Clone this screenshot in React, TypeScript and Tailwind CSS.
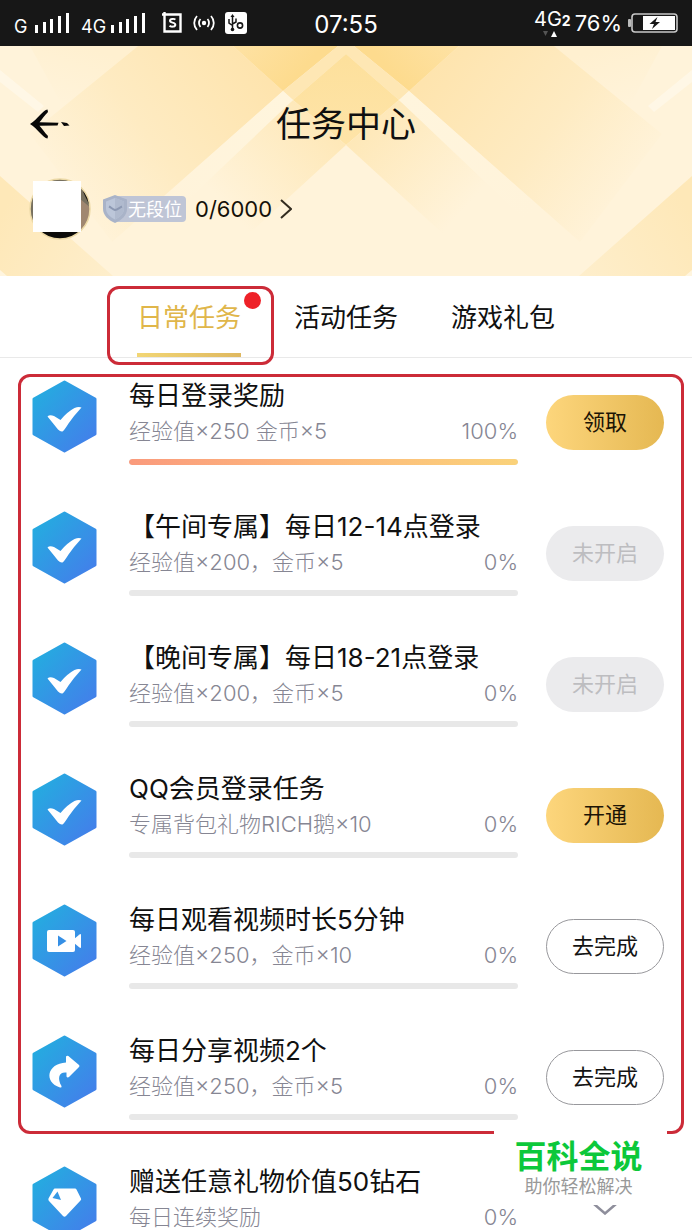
import React, { useState } from 'react';

type IconKind = 'check' | 'video' | 'share' | 'diamond';
type ActionKind = 'gold' | 'disabled' | 'outline' | 'more';

interface Task {
  title: string;
  reward: string;
  progress: number;
  icon: IconKind;
  action: ActionKind;
  label: string;
}

const TABS = ['日常任务', '活动任务', '游戏礼包'];

const TASKS: Task[] = [
  { title: '每日登录奖励', reward: '经验值×250 金币×5', progress: 100, icon: 'check', action: 'gold', label: '领取' },
  { title: '【午间专属】每日12-14点登录', reward: '经验值×200，金币×5', progress: 0, icon: 'check', action: 'disabled', label: '未开启' },
  { title: '【晚间专属】每日18-21点登录', reward: '经验值×200，金币×5', progress: 0, icon: 'check', action: 'disabled', label: '未开启' },
  { title: 'QQ会员登录任务', reward: '专属背包礼物RICH鹅×10', progress: 0, icon: 'check', action: 'gold', label: '开通' },
  { title: '每日观看视频时长5分钟', reward: '经验值×250，金币×10', progress: 0, icon: 'video', action: 'outline', label: '去完成' },
  { title: '每日分享视频2个', reward: '经验值×250，金币×5', progress: 0, icon: 'share', action: 'outline', label: '去完成' },
];

const GIFT_TASK: Task = {
  title: '赠送任意礼物价值50钻石', reward: '每日连续奖励', progress: 0, icon: 'diamond', action: 'more', label: '展开',
};

const ACTION_STYLES = {
  gold: 'bg-linear-to-r from-[#fdd67c] to-[#e5b852] text-[#1c1405]',
  disabled: 'bg-[#ebebed] text-[#bdbdc0]',
  outline: 'border border-[#98989c] bg-white text-[#141414]',
};

const Signal = () => (
  <svg className="h-5 w-9" viewBox="0 0 36 20" fill="#fff" aria-hidden="true">
    <rect x="0" y="12" width="3" height="8" />
    <rect x="8" y="9" width="3" height="11" />
    <rect x="15" y="6" width="3" height="14" />
    <rect x="23" y="3" width="3" height="17" />
    <rect x="31" y="0" width="3" height="20" />
  </svg>
);

const StatusBar = () => (
  <div className="grid h-[46px] grid-cols-[1fr_auto_1fr] items-center bg-[#171717] px-[14px] text-white">
    <div className="flex items-center">
      <span className="mt-2 w-[21px] text-lg">G</span>
      <Signal />
      <span className="ml-[10px] mt-2 w-[30px] text-lg">4G</span>
      <Signal />
      <svg className="ml-[15px] h-[22px] w-5" viewBox="0 0 20 22" fill="none" stroke="#fff" aria-hidden="true">
        <path d="M0 2.5H18.5V19.5H2.5V0" strokeWidth="2.4" />
        <path d="M13.3 7.6C12.5 6.6 8 6.4 8 8.7C8 11.2 13.3 10 13.3 12.7C13.3 15.2 8.500 15 7.600 13.600" strokeWidth="2" />
      </svg>
      <svg className="ml-[11px] h-[18px] w-[22px]" viewBox="0 0 22 18" fill="none" stroke="#fff" strokeWidth="1.8" aria-hidden="true">
        <circle cx="11" cy="9" r="2.200" fill="#fff" stroke="none" />
        <path d="M7.500 5C5.500 7.200 5.500 10.800 7.500 13M14.500 5C16.500 7.200 16.500 10.800 14.500 13M4 2C0.300 6 0.300 12 4 16M18 2C21.700 6 21.700 12 18 16" />
      </svg>
      <svg className="ml-[10px] h-[22px] w-[22px]" viewBox="0 0 22 22" fill="none" stroke="#171717" aria-hidden="true">
        <rect width="22" height="22" rx="3" fill="#fff" stroke="none" />
        <path d="M7.500 4V17M4 7V11L7.500 13.500M11 6.500V10L7.500 12" strokeWidth="1.500" />
        <path d="M5.500 5L7.500 2L9.500 5Z" fill="#171717" stroke="none" />
        <circle cx="7.500" cy="17.500" r="1.800" fill="#171717" stroke="none" />
        <circle cx="15" cy="13.500" r="2.600" strokeWidth="1.600" />
      </svg>
    </div>
    <span className="pt-1 text-2xl">07:55</span>
    <div className="flex items-center justify-end">
      <div className="flex flex-col">
        <span className="text-xl leading-[20px]">4G<b className="text-sm">2</b></span>
        <svg className="ml-[9px] h-[6px] w-[14px]" viewBox="0 0 14 6" aria-hidden="true">
          <path d="M0 0H5L2.500 5Z" fill="#555" />
          <path d="M8 6H14L11 0Z" fill="#fff" />
        </svg>
      </div>
      <span className="ml-1 text-[22px]">76%</span>
      <svg className="ml-[6px] h-5 w-[50px]" viewBox="0 0 50 20" aria-hidden="true">
        <rect x="0" y="6" width="3" height="8" rx="1" fill="#bbb" />
        <rect x="4" y="1" width="45" height="18" rx="3" fill="none" stroke="#c8c8c8" strokeWidth="1.600" />
        <rect x="15" y="3" width="32" height="14" fill="#fff" />
        <path d="M29.500 4L21.500 11H26L24 16L32 9H27.500Z" fill="#171717" />
      </svg>
    </div>
  </div>
);

// Overlapping golden ribbons behind the header, mirrored around the centre
const HalfPattern = () => (
  <g>
    <path d="M30 0H138L63 61Z" fill="url(#corner)" />
    <path d="M138 0H233L283 45L112 196L30 88Z" fill="url(#band)" />
    <path d="M0 24L44 60L38 66L0 36Z" fill="#fffaee" opacity="0.6" />
    <path d="M233 0H338L283 45Z" fill="url(#wedge)" />
    <path d="M338 0H346V8L293 54L283 45Z" fill="#fee7b4" />
    <path d="M346 8V99L293 54Z" fill="url(#core)" />
    <path d="M293 54L346 99L240 196L160 170Z" fill="url(#inner)" />
    <path d="M283 45L293 54L150 190L120 190Z" fill="url(#ribbon)" />
    <path d="M0 130L113 230H0Z" fill="url(#foot)" />
    <path d="M0 224L7 230H0Z" fill="#fff5df" />
  </g>
);

const HeaderPattern = () => (
  <svg className="absolute inset-0 h-full w-full" viewBox="0 0 692 230" preserveAspectRatio="none" aria-hidden="true">
    <defs>
      <linearGradient id="corner" gradientUnits="userSpaceOnUse" x1="85" y1="0" x2="63" y2="61">
        <stop offset="0" stopColor="#fff0d0" />
        <stop offset="1" stopColor="#fff3da" />
      </linearGradient>
      <linearGradient id="band" gradientUnits="userSpaceOnUse" x1="258" y1="22" x2="70" y2="160">
        <stop offset="0" stopColor="#fee4ae" />
        <stop offset="0.550" stopColor="#feebc2" />
        <stop offset="1" stopColor="#fff3da" />
      </linearGradient>
      <linearGradient id="wedge" gradientUnits="userSpaceOnUse" x1="233" y1="0" x2="283" y2="45">
        <stop offset="0" stopColor="#fee2a4" />
        <stop offset="1" stopColor="#fddb8e" />
      </linearGradient>
      <linearGradient id="core" gradientUnits="userSpaceOnUse" x1="320" y1="10" x2="320" y2="99">
        <stop offset="0" stopColor="#fde09c" />
        <stop offset="1" stopColor="#fee4a8" />
      </linearGradient>
      <linearGradient id="inner" gradientUnits="userSpaceOnUse" x1="322" y1="74" x2="225" y2="160">
        <stop offset="0" stopColor="#fee8b8" />
        <stop offset="1" stopColor="#fff3da" />
      </linearGradient>
      <linearGradient id="ribbon" gradientUnits="userSpaceOnUse" x1="288" y1="50" x2="160" y2="170">
        <stop offset="0" stopColor="#fff5dd" />
        <stop offset="1" stopColor="#fff3da" />
      </linearGradient>
      <linearGradient id="foot" gradientUnits="userSpaceOnUse" x1="0" y1="170" x2="110" y2="230">
        <stop offset="0" stopColor="#fee8b8" />
        <stop offset="1" stopColor="#feeecb" />
      </linearGradient>
    </defs>
    <rect width="692" height="230" fill="#fff3da" />
    <HalfPattern />
    <g transform="translate(692 0) scale(-1 1)">
      <HalfPattern />
    </g>
  </svg>
);

const Header = () => (
  <header className="relative px-[29px] pb-9 pt-12">
    <HeaderPattern />
    <div className="relative grid h-[60px] grid-cols-[1fr_auto_1fr] items-center">
      <button aria-label="返回" className="w-fit">
        <svg className="h-[30px] w-[42px]" viewBox="0 0 42 30" fill="#080808" aria-hidden="true">
          <path d="M18.500 0.500C14 1 9 10 1 15C9 20 14 29 18.500 29.500L19 27C15.500 23.500 12.500 19 10.500 16.800L28.500 16.500L29.500 13.800L10.500 13.200C12.500 11 15.500 6.500 19 3Z" />
          <path d="M32 13L38 14L40.500 16.500L35 17Z" />
        </svg>
      </button>
      <h1 className="text-[35px] leading-[60px]">任务中心</h1>
    </div>
    <div className="relative mt-6 flex h-[62px] items-center">
      <div className="relative h-[62px] w-[62px]">
        <svg className="h-full w-full" viewBox="0 0 62 62" aria-hidden="true">
          <defs>
            <clipPath id="avatar"><circle cx="31" cy="31" r="30" /></clipPath>
          </defs>
          <g clipPath="url(#avatar)">
            <rect width="62" height="62" fill="#77705f" />
            <path d="M50 4H62V30L56 18Z" fill="#15110d" />
            <path d="M50 20L62 30V46L50 56Z" fill="#a08770" />
            <rect y="53" width="50" height="9" fill="#0b0a08" />
            <path d="M48 53H56L48 62Z" fill="#0b0a08" />
          </g>
          <circle cx="31" cy="31" r="30" fill="none" stroke="#ecd9a6" strokeWidth="1.500" />
        </svg>
        <div className="absolute left-1 top-[3px] h-[51px] w-12 bg-white" />
      </div>
      <div className="ml-[11px] flex h-[30px] items-center">
        <svg className="relative z-10 h-[30px] w-[26px]" viewBox="0 0 26 30" aria-hidden="true">
          <path d="M13 1L25 5.500V15C25 21 20 26 13 29C6 26 1 21 1 15V5.500Z" fill="#a9b3c8" />
          <path d="M13 4L22 7.500V14.500C22 19.500 18 23 13 25.500C8 23 4 19.500 4 14.500V7.500Z" fill="#bcc6d9" />
          <path d="M13 4L22 7.500V14.500C22 19.500 18 23 13 25.500Z" fill="#b0bace" />
          <path d="M7 12.500C9 13.500 11 15.500 13 16C15.500 16 17.500 13.500 20 12.500" fill="none" stroke="#8c98b2" strokeWidth="2" />
        </svg>
        <span className="-ml-[13px] h-[26px] rounded-[4px] bg-[#bfc5d6] pl-[13px] pr-1 text-lg leading-[28px] text-white">无段位</span>
      </div>
      <a href="#level" className="ml-[9px] flex items-center gap-2 text-[22px] text-[#141008]">
        0/6000
        <svg className="h-5 w-3" viewBox="0 0 12 20" fill="none" stroke="#332c20" strokeWidth="2" aria-hidden="true">
          <path d="M1 1L11 10L1 19" />
        </svg>
      </a>
    </div>
  </header>
);

const TaskIcon = ({ kind }: { kind: IconKind }) => (
  <svg className="mt-[6px] h-[73px] w-[65px] shrink-0" viewBox="0 0 65 73" aria-hidden="true">
    <defs>
      <linearGradient id={`hex-${kind}`} x1="0" y1="0" x2="1" y2="1">
        <stop offset="0.100" stopColor="#25abe0" />
        <stop offset="0.900" stopColor="#4280ea" />
      </linearGradient>
    </defs>
    <path
      d="M32.500 2L63 19V54L32.500 71L2 54V19Z"
      fill={`url(#hex-${kind})`}
      stroke={`url(#hex-${kind})`}
      strokeWidth="3"
      strokeLinejoin="round"
    />
    {kind === 'check' && (
      <path d="M15.500 36.500Q17.500 34.500 22 36L28.500 40Q35 32 42.500 28Q46.500 26.500 49.500 27.500Q42 35.500 36.500 43.500Q32.500 50 30.500 51.500Q28.500 52 26 49.500Q20 42 15.500 36.500Z" fill="#fff" />
    )}
    {kind === 'video' && (
      <>
        <rect x="15" y="26" width="28" height="22" rx="2" fill="#fff" />
        <path d="M42 35L47.500 30.500Q49 29.500 49 31V43Q49 44.500 47.500 43.500L42 39Z" fill="#fff" />
        <path d="M26 31.500L34.500 37L26 42.500Z" fill="#358fe5" />
      </>
    )}
    {kind === 'share' && (
      <path d="M34 27.500V21.500Q35.500 20 37.500 22L47 30Q48 31 47 32L37.500 41.500Q35.500 43.500 34.500 41.500V37.500C27 36.500 25 43 29.500 51Q30 53 28 52.500C11.500 47 15 28.500 34 27.500Z" fill="#fff" />
    )}
    {kind === 'diamond' && (
      <>
        <path d="M22.500 22.500H43Q44 22.500 44.500 23.500L49 32.500Q49.500 33.500 48.500 34.500L34 50Q32.500 51.500 31 50L17 35Q16 34 16.500 32.500L21.500 23.500Z" fill="#fff" />
        <path d="M25.500 25.500L29 34L20.500 32Z" fill="#3498e4" />
      </>
    )}
  </svg>
);

const TaskRow = ({ task }: { task: Task }) => (
  <li className="flex h-[131px] items-start pl-8 pr-7">
    <TaskIcon kind={task.icon} />
    <div className="ml-8 min-w-0 flex-1 pt-1">
      <h2 className="h-9 whitespace-nowrap text-[26px] leading-9 text-[#101010]">{task.title}</h2>
      <div className="flex h-[34px] justify-between whitespace-nowrap text-[22px] font-light leading-[34px] text-[#868693]">
        <span>{task.reward}</span>
        <span>{task.progress}%</span>
      </div>
      <div className="mt-[11px] h-[6px] overflow-hidden rounded-full bg-[#e8e8e8]">
        <div
          className="h-full rounded-full bg-linear-to-r from-[#fa9a7c] via-[#fdb97c] to-[#fad27a]"
          style={{ width: `${task.progress}%` }}
        />
      </div>
    </div>
    {task.action === 'more' ? (
      <button aria-label={task.label} className="ml-7 mt-[21px] flex h-[55px] w-[118px] items-center justify-center">
        <svg className="h-3 w-6" viewBox="0 0 24 12" fill="none" stroke="#8e8e9b" strokeWidth="2.500" aria-hidden="true">
          <path d="M1 1L12 10.500L23 1" />
        </svg>
      </button>
    ) : (
      <button
        disabled={task.action === 'disabled'}
        className={`ml-7 mt-[21px] h-[55px] w-[118px] shrink-0 rounded-full text-[22px] ${ACTION_STYLES[task.action]}`}
      >
        {task.label}
      </button>
    )}
  </li>
);

const App: React.FC = () => {
  const [activeTab, setActiveTab] = useState(0);

  return (
    <div className="relative h-screen overflow-hidden bg-white font-['Inter','Noto_Sans_CJK_SC',sans-serif] text-[#101010]">
      <StatusBar />
      <Header />

      <nav className="flex h-[82px] justify-center gap-[53px] border-b border-[#e9e9e9]">
        {TABS.map((tab, i) => (
          <button
            key={tab}
            onClick={() => setActiveTab(i)}
            className={`relative h-[81px] text-[26px] leading-[84px] ${i === activeTab ? 'text-[#e0b64a]' : 'text-[#101010]'}`}
          >
            {tab}
            {i === activeTab && (
              <span className="absolute inset-x-0 bottom-0 h-1 bg-linear-to-r from-[#f2d675] to-[#dfb860]" />
            )}
            {i === 0 && (
              <>
                <span className="absolute -right-5 top-4 h-[17px] w-[17px] rounded-full bg-[#ee2128]" />
                <span className="absolute -bottom-2 -left-[30px] -right-[33px] top-[10px] rounded-xl border-3 border-[#cc2b38]" />
              </>
            )}
          </button>
        ))}
      </nav>

      <main className="pt-4">
        <div className="relative">
          <ul>
            {TASKS.map((task) => (
              <TaskRow key={task.title} task={task} />
            ))}
          </ul>
          <div className="pointer-events-none absolute bottom-[26px] left-[18px] right-2 top-0 rounded-xl border-3 border-[#cc2b38]" />
        </div>
        <ul>
          <TaskRow task={GIFT_TASK} />
        </ul>
      </main>

      <aside className="absolute bottom-[25px] right-[25px] flex h-[74px] w-[173px] flex-col items-center bg-white pr-1 pt-[6px]">
        <strong className="text-[32px] font-bold leading-10 text-[#0cc83a]">百科全说</strong>
        <span className="text-lg leading-5 text-[#999]">助你轻松解决</span>
      </aside>
    </div>
  );
};

export default App;
